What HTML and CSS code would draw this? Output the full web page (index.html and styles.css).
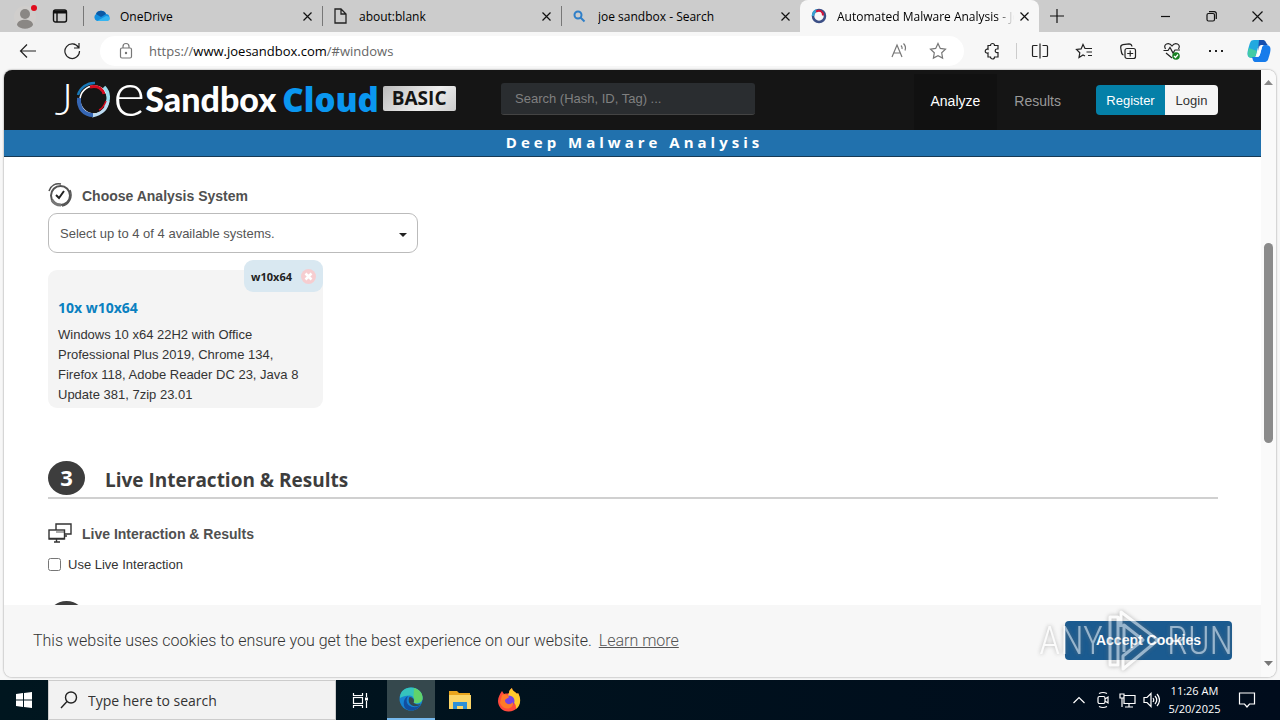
FILE: index.html
```html
<!DOCTYPE html>
<html lang="en">
<head>
<meta charset="utf-8">
<title>Automated Malware Analysis - Joe Sandbox</title>
<link rel="stylesheet" href="styles.css">
</head>
<body>

<div class="tab-bar">
    <button class="profile" title="Profile">
        <svg width="24" height="28" viewBox="0 0 24 28"><circle cx="11" cy="15" r="11" fill="#d0cecc"/><circle cx="11" cy="12" r="5" fill="#8a8784"/><path d="M3 23c0-7 16-7 16 0-3 5-13 5-16 0z" fill="#8a8784"/><circle cx="20" cy="6" r="3" fill="#e00b1c"/></svg>
    </button>
    <button class="tab-actions" title="Tab actions">
        <svg width="16" height="16" viewBox="0 0 16 16" fill="none" stroke="#111" stroke-width="1.4"><rect x="1.5" y="2" width="13" height="12" rx="2"/><path d="M2 4h12" stroke-width="3"/><path d="M5 4v10"/></svg>
    </button>
    <div class="tab">
        <svg width="17" height="16" viewBox="0 0 17 16"><path d="M4 13a4 4 0 0 1-1-7 5.5 5.5 0 0 1 10 0 3.6 3.6 0 0 1 1 7z" fill="#1490df"/><path d="M3 6a5.500 5.500 0 0 1 10 0L8 9z" fill="#0c59a4"/><path d="M4 13l9-5c5 0 5 5 1 5z" fill="#35b5f1"/></svg>
        <span class="tab-name">OneDrive</span>
        <button class="close" title="Close tab"><svg width="9" height="9" viewBox="0 0 9 9"><path d="M.5.5l8 8M8.500.5l-8 8"/></svg></button>
    </div>
    <div class="tab">
        <svg width="17" height="16" viewBox="0 0 17 16" fill="none" stroke="#222" stroke-width="1.300"><path d="M3 1h6l5 5v9H3zM9 1v5h5"/></svg>
        <span class="tab-name">about:blank</span>
        <button class="close" title="Close tab"><svg width="9" height="9" viewBox="0 0 9 9"><path d="M.5.5l8 8M8.500.5l-8 8"/></svg></button>
    </div>
    <div class="tab">
        <svg width="17" height="16" viewBox="0 0 17 16" fill="none" stroke="#2f7fc8" stroke-width="2"><circle cx="7" cy="7" r="3.500"/><path d="M9.500 9.500l4 4"/></svg>
        <span class="tab-name">joe sandbox - Search</span>
        <button class="close" title="Close tab"><svg width="9" height="9" viewBox="0 0 9 9"><path d="M.5.5l8 8M8.500.5l-8 8"/></svg></button>
    </div>
    <div class="tab active">
        <svg width="17" height="16" viewBox="0 0 17 16" fill="none" stroke-width="2.500"><circle cx="9" cy="8" r="6" stroke="#3c4f86"/><path d="M3 8a6 6 0 0 1 4-5.700" stroke="#38a0d0"/><path d="M6 3.500c4-2 7 0 7 4" stroke="#d2143a" stroke-width="2"/></svg>
        <span class="tab-name">Automated Malware Analysis - Joe Sandbox</span>
        <button class="close" title="Close tab"><svg width="9" height="9" viewBox="0 0 9 9"><path d="M.5.5l8 8M8.500.5l-8 8"/></svg></button>
    </div>
    <button class="new-tab" title="New tab"><svg width="14" height="14" viewBox="0 0 14 14"><path d="M7 0v14M0 7h14"/></svg></button>
    <div class="window-controls">
        <button title="Minimize"><svg width="11" height="11" viewBox="0 0 11 11"><path d="M1 5.500h9"/></svg></button>
        <button title="Restore"><svg width="11" height="11" viewBox="0 0 11 11"><rect x="1" y="2.500" width="7.500" height="7.500" rx="1.500"/><path d="M3 .7h5a2 2 0 0 1 2.300 2.300v5"/></svg></button>
        <button title="Close"><svg width="11" height="11" viewBox="0 0 11 11"><path d="M.5.5l10 10M10.500.5l-10 10"/></svg></button>
    </div>
</div>

<div class="toolbar">
    <button title="Back"><svg width="18" height="18" viewBox="0 0 18 18"><path d="M17 9H1.500M8 2.500L1.500 9 8 15.500"/></svg></button>
    <button title="Refresh"><svg width="18" height="18" viewBox="0 0 18 18"><path d="M15.500 5.500A7.300 7.300 0 1 0 16.500 9M16 1v5h-5"/></svg></button>
    <div class="address">
        <svg width="14" height="18" viewBox="0 0 14 18" fill="none" stroke="#666" stroke-width="1.200"><rect x="1.500" y="6" width="11" height="10" rx="1.500"/><path d="M4 6V4.500a3 3 0 0 1 6 0V6"/><circle cx="7" cy="11" r=".6" fill="#666"/></svg>
        <div class="url">https://<b>www.joesandbox.com</b>/#windows</div>
        <button class="dim" title="Read aloud"><svg width="18" height="18" viewBox="0 0 18 18"><path d="M2 15L7 3l5 12M4 11h6M11 3.500q1.500 1.500 1 3.500M13.500 1.500q3 3 1.500 7"/></svg></button>
        <button class="dim" title="Favorite"><svg width="18" height="18" viewBox="0 0 18 18"><path d="M9 1.500l2.300 4.900 5.200.7-3.800 3.700.9 5.300L9 13.600l-4.600 2.500.9-5.300L1.500 7.100l5.200-.7z"/></svg></button>
    </div>
    <div class="tools">
        <button title="Extensions"><svg width="18" height="18" viewBox="0 0 18 18"><path d="M5 3.500h2.500a2 2 0 1 1 4 0H15V7h-1a1.800 1.800 0 1 0 0 3.600h1V15h-3.500a2 2 0 1 1-4 0H5v-4a2 2 0 1 1 0-3.700z"/></svg></button>
        <span class="separator"></span>
        <button title="Split screen"><svg width="18" height="18" viewBox="0 0 18 18"><path d="M6.500 3.500h-4a1 1 0 0 0-1 1v9a1 1 0 0 0 1 1h4M9 1.500v15M11.500 3.500h4a1 1 0 0 1 1 1v9a1 1 0 0 1-1 1h-4"/></svg></button>
        <button title="Favorites"><svg width="18" height="18" viewBox="0 0 18 18"><path d="M10 14l-2-1-4 2.500.8-4.700L1.500 7.500l4.600-.6L8 2.500l2 4h7M11.500 10H17M13 13.500h4"/></svg></button>
        <button title="Collections"><svg width="18" height="18" viewBox="0 0 18 18"><rect x="6" y="6.500" width="10.500" height="10" rx="2"/><path d="M11.200 8.500v6M8.200 11.500h6M4.500 13c-2-.4-2-2-2.800-7.500C1.600 3.500 2 3 4 2.700l6-.9c2 0 2.600.7 3 2.700"/></svg></button>
        <button title="Browser essentials"><svg width="18" height="18" viewBox="0 0 18 18"><path d="M2.500 7C-.5 2 6-.5 9 4c3-4.500 9.500-2 6.500 3M.5 8.500h4.500l2-3 3 5.500 2-3h5M3 11l6 5"/><circle cx="13" cy="14" r="3.800" fill="#168021" stroke="none"/><path d="M11 14l1.500 1.500 2.500-3" stroke="#fff"/></svg></button>
        <button title="Settings and more"><svg width="18" height="18" viewBox="0 0 18 18"><path d="M2 9h2M8 9h2M14 9h2" stroke-width="2"/></svg></button>
        <button class="copilot" title="Copilot"><svg width="26" height="26" viewBox="0 0 26 26"><path d="M8 2h8c3 0 3 2 4 5h-5c-3 0-3 3-5 10-1 3-2 3-4 3-5 0-5-4-4-8C4 5 4 2 8 2z" fill="#22a9df"/><path d="M3 10l8 3-2 6c-8 3-8-3-6-9z" fill="#43cba5"/><path d="M13 2h4c3 0 3 4 5 5h-7c-2 0-2 3-3 6z" fill="#164fae"/><path d="M18 24h-8c-3 0-3-2-4-5h5c3 0 3-3 5-10 1-2 2-2 4-2 5 0 5 4 4 8-2 7-2 9-6 9z" fill="#177ceb"/><path d="M11 19c3 0 3-3 5-10l1-2c-3 0-4 4-6 12z" fill="#fff"/></svg></button>
    </div>
</div>

<div class="page">
    <div class="view">
        <header class="header">
            <a class="logo" href="#">
                <span class="thin">J</span>
                <svg width="38" height="38" viewBox="0 0 38 38" fill="none"><circle cx="19" cy="19" r="14" stroke="#fff" stroke-width="1.500"/><path d="M3 14A17 17 0 0 1 20 2" stroke="#1878b8" stroke-width="2.500"/><path d="M15 6c9-2 13 3 14 7" stroke="#d40c20" stroke-width="3"/><path d="M29 6c5 5 6 13 1 20" stroke="#9adced" stroke-width="3.500"/><path d="M33 20c-1 8-7 13-16 15" stroke="#bcdcf2" stroke-width="3"/><path d="M4 17c-1 10 5 17 14 17" stroke="#3566b4" stroke-width="4"/><path d="M31 20c-2 5-4 8-7 9" stroke="#d40c20" stroke-width="1.500"/></svg>
                <span class="thin-e">e</span>
                <span class="sandbox">Sandbox</span>
                <span class="cloud">Cloud</span>
                <span class="basic">BASIC</span>
            </a>
            <input class="search" type="text" aria-label="Search" placeholder="Search (Hash, ID, Tag) ...">
            <nav>
                <a class="current" href="#">Analyze</a>
                <a href="#">Results</a>
            </nav>
            <div class="account">
                <button class="register">Register</button>
                <button class="login">Login</button>
            </div>
        </header>
        <div class="banner">Deep Malware Analysis</div>

        <main class="content">
            <h3>
                <svg width="24" height="24" viewBox="0 0 24 24" fill="none" stroke="#555"><circle cx="12.500" cy="12.500" r="9.500" stroke-width="2"/><path d="M1 8C3 2 8 0 13 1M22 7c3 7-1 15-8 16" stroke-width="1.500"/><path d="M4 17c2 4 6 5 9 5" stroke="#777" stroke-width="3"/><path d="M8 12l3 3 5-7" stroke="#222" stroke-width="2"/></svg>
                <label for="system">Choose Analysis System</label>
            </h3>
            <div class="dropdown">
                <select id="system"><option>Select up to 4 of 4 available systems.</option></select>
                <svg width="8" height="4" viewBox="0 0 8 4"><path d="M0 0h8L4 4z" fill="#222"/></svg>
            </div>
            <div class="card">
                <div class="tag">w10x64
                    <button title="Remove"><svg width="15" height="15" viewBox="0 0 15 15"><circle cx="7.500" cy="7.500" r="7.500" fill="#f6cdd0"/><path d="M4.500 4.500l6 6M10.500 4.500l-6 6" stroke="#fff" stroke-width="2.500"/></svg></button>
                </div>
                <h4>10x w10x64</h4>
                <p>Windows 10 x64 22H2 with Office Professional Plus 2019, Chrome 134, Firefox 118, Adobe Reader DC 23, Java 8 Update 381, 7zip 23.01</p>
            </div>
            <h2><span class="step">3</span><span class="heading">Live Interaction &amp; Results</span></h2>
            <h3>
                <svg width="24" height="20" viewBox="0 0 24 20" fill="none" stroke="#333" stroke-width="1.400"><path d="M8 7V1h15v10h-6"/><path d="M8 9h9" stroke="#aaa" stroke-width="2"/><rect x="1" y="7" width="15.500" height="9"/><path d="M1 15.500h15M8.500 16v3M6 19h6M17 13h2"/></svg>
                <span>Live Interaction &amp; Results</span>
            </h3>
            <label class="check"><input type="checkbox">Use Live Interaction</label>
            <div class="step next"></div>
        </main>

        <div class="cookies">
            <p>This website uses cookies to ensure you get the best experience on our website. <a href="#">Learn more</a></p>
            <button>Accept Cookies</button>
            <div class="watermark">
                <span>ANY</span>
                <svg width="54" height="62" viewBox="0 0 54 62" fill="none" stroke="#fff" stroke-width="3" stroke-linejoin="round"><path d="M2 7h8v48H2zM13 17V2l37 28-35 29V46l20-16-19-15v27"/></svg>
                <span>RUN</span>
            </div>
        </div>
    </div>
    <div class="scrollbar">
        <svg width="9" height="5" viewBox="0 0 9 5"><path d="M0 5h9L4.500 0z" fill="#888"/></svg>
        <div class="thumb"></div>
        <svg width="9" height="5" viewBox="0 0 9 5"><path d="M0 0h9L4.500 5z" fill="#777"/></svg>
    </div>
</div>

<div class="taskbar">
    <button class="start" title="Start"><svg width="16" height="16" viewBox="0 0 16 16"><path d="M0 2l7-1v6.500H0zM8 1l8-1v7.500H8zM0 8.500h7V15l-7-1zM8 8.500h8V16l-8-1z" fill="#fff"/></svg></button>
    <label class="task-search">
        <svg width="18" height="18" viewBox="0 0 18 18" fill="none" stroke="#222" stroke-width="1.400"><circle cx="11" cy="6.500" r="5.500"/><path d="M7 10.500L1 17"/></svg>
        <input type="text" placeholder="Type here to search" aria-label="Type here to search">
    </label>
    <button class="app" title="Task View"><svg width="17" height="17" viewBox="0 0 17 17" fill="none" stroke="#fff" stroke-width="1.200"><path d="M1.500 1v2.500h9V1M1.500 16v-2.500h9V16M14.500 1v4M14.500 9v7"/><rect x="1.500" y="5.500" width="9" height="6"/><path d="M14.500 5.500v3" stroke-width="3"/></svg></button>
    <button class="app open" title="Microsoft Edge"><svg width="24" height="24" viewBox="0 0 24 24"><circle cx="12" cy="12" r="11.500" fill="#1684d1"/><path d="M1 11C1 4 6 .5 12 .5c8 0 12 6 11.500 11-.5 5-6 6-9 4 2-3 0-7-4-7-4 0-7 1-9.500 2.500z" fill="#35c4bd"/><path d="M15 1c7 2 9 7 8.500 11-.5 4-6 5-9 3.500 1-2 1-3 0-5z" fill="#61d36a"/><path d="M9 9c-3 5-1 10 5 11 3 .5 5-.5 8-2-4 6-10 6.500-14 4.500C3 20 4 11 9 9z" fill="#124f9f"/><path d="M10.500 10c-2 4 0 8 4 9 3 .5 5 0 7.500-2-3 1-7 0-7.500-1.500 1-1 1-5-4-5.500z" fill="#35484d"/></svg></button>
    <button class="app" title="File Explorer"><svg width="22" height="20" viewBox="0 0 22 20"><path d="M0 1h8l2 2h11v16H0z" fill="#e9a51c"/><path d="M0 5h22v14H0z" fill="#fbd567"/><path d="M4 19v-7h14v7h-4v-3H8v3z" fill="#2e8fd6"/></svg></button>
    <button class="app" title="Firefox"><svg width="24" height="24" viewBox="0 0 24 24"><path d="M1 13C1 9 3 6 5 3l2 3c2-1 4 0 5-1 0-3 2-4 3-5 0 3 4 4 5 6l1-1c5 9 0 18-9 18.500C6 24 1 19 1 13z" fill="#ff4a3d"/><path d="M15 0c0 3 4 4 5 6l1-1c4 7 2 13-2 16 1-8-7-8-8-12 0-3 1-4 1-4 0-3 2-4 3-5z" fill="#ffca2c"/><circle cx="12" cy="13" r="5.500" fill="#7542e5"/><path d="M5 7c3-2 6 0 7 2-1 2-4 1-4 4 1 4 6 4 8 1 1 8-10 9-13 1z" fill="#ff7a28"/></svg></button>
    <div class="tray">
        <button title="Show hidden icons"><svg width="12" height="8" viewBox="0 0 12 8"><path d="M.5 7L6 1.500 11.500 7"/></svg></button>
        <button title="Meet now"><svg width="14" height="18" viewBox="0 0 14 18"><rect x="2" y="5.500" width="7" height="7" rx="1.500"/><path d="M9 8l3-2v6l-3-2M3 2.500q4-2 8 0M3 15.500q4 2 8 0"/></svg></button>
        <button title="Network"><svg width="17" height="15" viewBox="0 0 17 15"><path d="M5 2.500h11v8H5zM10 11v3M6 14h8M3 5v9M1 1h4v4H1z"/></svg></button>
        <button title="Volume"><svg width="17" height="16" viewBox="0 0 17 16"><path d="M1 5.500h3l4-4v13l-4-4H1zM10 6q1.500 2 0 4M12 4q3.500 4 0 8M14 2q5 6 0 12"/></svg></button>
        <div class="clock"><span>11:26 AM</span><span>5/20/2025</span></div>
        <button class="notices" title="Notifications"><svg width="18" height="18" viewBox="0 0 18 18"><path d="M1.500 2h15v11h-5L9 16l-2.500-3h-5z"/></svg></button>
    </div>
</div>

</body>
</html>
```
FILE: styles.css
```css
* {
    box-sizing: border-box;
}
body {
    margin: 0;
    height: 100vh;
    display: flex;
    flex-direction: column;
    overflow: hidden;
    background-color: #f7f7f7;
    font-family: "Liberation Sans", Arial, sans-serif;
    font-size: 13px;
    color: #333;
}
svg {
    display: block;
    flex: none;
}
button {
    display: flex;
    align-items: center;
    justify-content: center;
    flex: none;
    padding: 0;
    border: 0;
    background: none;
    font-family: inherit;
    cursor: pointer;
}

/* browser tabs */
.tab-bar {
    flex: none;
    display: flex;
    height: 32px;
    background-color: #ccc;
    font-family: "Open Sans", "Noto Sans", sans-serif;
    font-size: 12px;
    color: #000;
}
.profile {
    width: 48px;
    padding-left: 4px;
}
.tab-actions {
    width: 24px;
    margin-right: 11px;
}
.tab {
    flex: 0 1 239px;
    min-width: 0;
    display: flex;
    align-items: center;
    gap: 10px;
    padding: 0 10px;
    background: linear-gradient(#777, #777) left center / 1px 20px no-repeat;
}
.tab.active {
    background: #f7f7f7;
    border-radius: 8px 8px 0 0;
}
.tab-name {
    flex: 1;
    overflow: hidden;
    white-space: nowrap;
}
.tab.active .tab-name {
    -webkit-mask-image: linear-gradient(90deg, #000 90%, transparent);
    mask-image: linear-gradient(90deg, #000 90%, transparent);
}
.tab .close {
    margin-left: -4px;
}
.close svg, .new-tab svg, .window-controls svg {
    fill: none;
    stroke: #111;
    stroke-width: 1.2;
}
.new-tab {
    width: 36px;
}
.window-controls {
    display: flex;
    margin-left: auto;
}
.window-controls button {
    width: 46px;
}

/* address bar */
.toolbar {
    flex: none;
    display: flex;
    align-items: center;
    height: 38px;
    padding-left: 6px;
}
.toolbar button {
    width: 44px;
    height: 32px;
}
.toolbar svg {
    fill: none;
    stroke: #222;
    stroke-width: 1.2;
}
.address {
    flex: 1;
    display: flex;
    align-items: center;
    height: 30px;
    margin-left: 6px;
    padding: 0 7px 0 19px;
    background-color: #fff;
    border-radius: 15px;
}
.url {
    flex: 1;
    margin-left: 16px;
    font-family: "Open Sans", "Noto Sans", sans-serif;
    font-size: 13px;
    color: #666;
}
.url b {
    font-weight: 400;
    color: #000;
}
.toolbar .dim {
    width: 39px;
}
.toolbar .address svg {
    stroke: #777;
}
.tools {
    display: flex;
    align-items: center;
    padding-left: 6px;
}
.separator {
    width: 1px;
    height: 16px;
    margin: 0 1px 0 2px;
    background-color: #ccc;
}
.tools .copilot {
    width: 42px;
}
.tools .copilot svg {
    stroke: none;
}

/* web page */
.page {
    flex: 1;
    min-height: 0;
    display: flex;
    margin: 0 4px 3px;
    background-color: #fff;
    border-radius: 8px;
    overflow: hidden;
    box-shadow: 0 0 2px rgba(0, 0, 0, 0.5);
}
.view {
    flex: 1;
    min-width: 0;
    display: flex;
    flex-direction: column;
}
.header {
    flex: none;
    display: flex;
    align-items: center;
    height: 60px;
    padding: 0 43px 0 44px;
    background-color: #151515;
}
.logo {
    display: flex;
    align-items: center;
    height: 60px;
    width: 453px;
    color: #fff;
    text-decoration: none;
    font-family: Lato, "Open Sans", sans-serif;
    line-height: 60px;
}
.thin {
    width: 27px;
    padding: 0 2px 4px 0;
    text-align: right;
    font-size: 44px;
    font-weight: 300;
}
.thin-e {
    padding-bottom: 16px;
    font-size: 62px;
    font-weight: 300;
}
.sandbox {
    padding-bottom: 2px;
    font-size: 34px;
    font-weight: 900;
}
.cloud {
    margin-left: 6px;
    font-family: "Open Sans", sans-serif;
    font-size: 33px;
    font-weight: 800;
    color: #0a97f0;
}
.basic {
    margin: 0 0 4px 4px;
    padding: 0 9px;
    font-family: "Open Sans", sans-serif;
    font-size: 19px;
    font-weight: 700;
    line-height: 25px;
    color: #151515;
    background: linear-gradient(135deg, #bbb, #eee 60%, #ccc);
    border-radius: 2px;
}
.search {
    width: 254px;
    height: 32px;
    margin-bottom: 2px;
    padding: 0 14px;
    background-color: #2a2d30;
    border: 0;
    border-bottom: 1px solid #444;
    border-radius: 3px;
    font-family: inherit;
    font-size: 13px;
    color: #ccc;
}
.search::placeholder {
    color: #808080;
}
nav {
    display: flex;
    align-self: stretch;
    margin-left: auto;
    padding-top: 4px;
}
nav a {
    padding: 0 17px;
    line-height: 54px;
    font-size: 14px;
    color: #999;
    text-decoration: none;
}
nav .current {
    background-color: #111;
    color: #fff;
}
.account {
    display: flex;
    height: 30px;
    margin-left: 18px;
    border-radius: 4px;
    overflow: hidden;
}
.register {
    width: 69px;
    background-color: #0480a8;
    color: #fff;
}
.login {
    width: 53px;
    background-color: #f5f5f5;
    color: #333;
}
.account button {
    font-size: 13px;
}
.banner {
    flex: none;
    height: 27px;
    padding-left: 4px;
    background-color: #2171ad;
    border-bottom: 1px solid #173a55;
    text-align: center;
    font-family: "Open Sans", sans-serif;
    font-size: 15px;
    font-weight: 700;
    letter-spacing: 4px;
    line-height: 25px;
    color: #fff;
}
.content {
    flex: 1;
    min-height: 0;
    overflow: hidden;
    padding: 26px 43px 0 44px;
}
h3 {
    display: flex;
    align-items: center;
    gap: 10px;
    height: 24px;
    margin: 0 0 6px;
    font-size: 14px;
    color: #505050;
}
h3 label, h3 span {
    padding-top: 2px;
}
.dropdown {
    position: relative;
    width: 370px;
}
.dropdown select {
    width: 100%;
    height: 40px;
    padding: 0 11px;
    appearance: none;
    background-color: #fff;
    border: 1px solid #bbb;
    border-radius: 9px;
    font-family: inherit;
    font-size: 13px;
    color: #555;
}
.dropdown svg {
    position: absolute;
    right: 11px;
    top: 20px;
    pointer-events: none;
}
.card {
    position: relative;
    width: 275px;
    margin-top: 17px;
    padding: 28px 10px 3px;
    background-color: #f4f4f4;
    border-radius: 9px;
}
.tag {
    position: absolute;
    top: -10px;
    right: 0;
    display: flex;
    align-items: center;
    gap: 9px;
    height: 32px;
    padding: 0 7px;
    background-color: #d9e8f1;
    border-radius: 9px;
    font-family: "Open Sans", sans-serif;
    font-size: 11px;
    font-weight: 700;
    color: #222;
}
.card h4 {
    margin: 0 0 7px;
    font-family: "Open Sans", sans-serif;
    font-size: 14px;
    line-height: 20px;
    color: #0a80c0;
}
.card p {
    margin: 0;
    line-height: 20px;
}
h2 {
    display: flex;
    align-items: center;
    gap: 20px;
    margin: 53px 0 22px;
    padding-bottom: 2px;
    border-bottom: 2px solid #d0d0d0;
    font-family: "Open Sans", sans-serif;
    font-size: 19px;
    line-height: 34px;
    color: #3d3d3d;
}
.heading {
    padding-top: 4px;
    line-height: 30px;
}
.step {
    width: 37px;
    height: 34px;
    background-color: #3d3d3d;
    border-radius: 50%;
    text-align: center;
    font-family: "Open Sans", sans-serif;
    font-size: 22px;
    font-weight: 700;
    line-height: 33px;
    color: #fff;
}
.check {
    display: flex;
    align-items: center;
    gap: 7px;
    height: 26px;
}
.check input {
    width: 13px;
    height: 13px;
    margin: 0;
}
.next {
    margin-top: 24px;
}
.cookies {
    flex: none;
    position: relative;
    display: flex;
    align-items: center;
    justify-content: space-between;
    height: 72px;
    padding: 0 29px 2px;
    background-color: #f7f7f7;
    font-family: Roboto, "Liberation Sans", sans-serif;
    font-size: 16px;
    font-weight: 300;
}
.cookies p {
    margin: 0;
}
.cookies a {
    margin-left: 3px;
    color: #555;
}
.cookies button {
    width: 167px;
    height: 39px;
    background-color: #1b5b90;
    border-radius: 4px;
    font-family: "Liberation Sans", sans-serif;
    font-size: 14px;
    font-weight: 700;
    color: #fff;
}
.watermark {
    position: absolute;
    right: 28px;
    top: 5px;
    display: flex;
    align-items: center;
    gap: 5px;
    opacity: 0.55;
    pointer-events: none;
    font-family: "Liberation Sans Narrow", "Roboto Condensed", Roboto, sans-serif;
    font-size: 38px;
    font-weight: 300;
    color: #fff;
    filter: drop-shadow(0 0 2px #777);
}
.scrollbar {
    flex: none;
    display: flex;
    flex-direction: column;
    align-items: center;
    justify-content: space-between;
    width: 15px;
    padding: 10px 0 11px;
    background-color: #fafafa;
}
.thumb {
    width: 9px;
    height: 200px;
    margin-bottom: 60px;
    background-color: #8b8b8b;
    border-radius: 5px;
}

/* taskbar */
.taskbar {
    flex: none;
    display: flex;
    height: 40px;
    background: linear-gradient(90deg, #00161f, #000c1c);
    font-family: "Open Sans", "Noto Sans", sans-serif;
    color: #fff;
}
.start, .app {
    width: 48px;
}
.task-search {
    display: flex;
    align-items: center;
    gap: 10px;
    width: 288px;
    padding-left: 11px;
    background-color: #f2f2f2;
    border: 1px solid #ccc;
}
.task-search input {
    flex: 1;
    min-width: 0;
    padding: 0;
    background: none;
    border: 0;
    outline: 0;
    font-family: inherit;
    font-size: 14px;
}
.task-search input::placeholder {
    color: #333;
}
.app {
    margin-right: 1px;
}
.app.open {
    margin-left: 2px;
    background-color: #35484d;
    border-bottom: 2px solid #76b9ed;
}
.tray {
    display: flex;
    margin-left: auto;
    padding-right: 12px;
}
.tray button {
    width: 24px;
}
.tray svg {
    fill: none;
    stroke: #fff;
    stroke-width: 1.2;
}
.clock {
    display: flex;
    flex-direction: column;
    justify-content: center;
    width: 63px;
    text-align: center;
    font-size: 11px;
    line-height: 18px;
}
.tray .notices {
    width: 42px;
}
```
